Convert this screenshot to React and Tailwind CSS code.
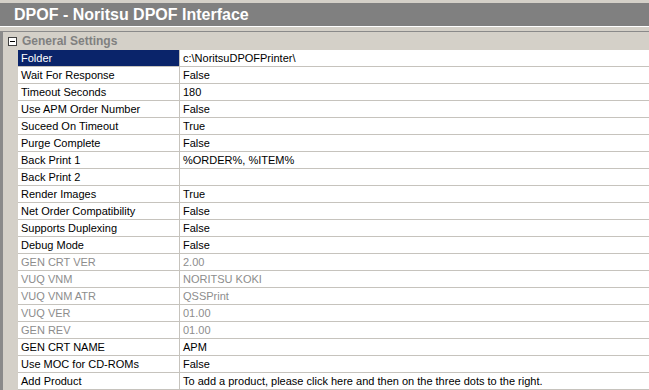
import React from "react";

const rows = [
  ["Folder", "c:\\NoritsuDPOFPrinter\\", "sel"],
  ["Wait For Response", "False"],
  ["Timeout Seconds", "180"],
  ["Use APM Order Number", "False"],
  ["Suceed On Timeout", "True"],
  ["Purge Complete", "False"],
  ["Back Print 1", "%ORDER%, %ITEM%"],
  ["Back Print 2", ""],
  ["Render Images", "True"],
  ["Net Order Compatibility", "False"],
  ["Supports Duplexing", "False"],
  ["Debug Mode", "False"],
  ["GEN CRT VER", "2.00", "off"],
  ["VUQ VNM", "NORITSU KOKI", "off"],
  ["VUQ VNM ATR", "QSSPrint", "off"],
  ["VUQ VER", "01.00", "off"],
  ["GEN REV", "01.00", "off"],
  ["GEN CRT NAME", "APM"],
  ["Use MOC for CD-ROMs", "False"],
  ["Add Product", "To add a product, please click here and then on the three dots to the right."],
];

function Row({ label, value, kind }) {
  const sel = kind === "sel";
  const off = kind === "off";
  return (
    <div className="flex h-[17px] border-b border-[#c6c3bd]">
      <div
        className={
          "w-[162px] shrink-0 pl-[3px] leading-[16px] border-r border-[#c6c3bd] " +
          (sel ? "bg-[#0a246a] text-white" : off ? "bg-white text-[#8d8d8d]" : "bg-white text-black")
        }
      >
        {label}
      </div>
      <div className={"flex-1 pl-[3px] leading-[16px] bg-white whitespace-nowrap " + (off ? "text-[#8d8d8d]" : "text-black")}>
        {value}
      </div>
    </div>
  );
}

export default function App() {
  return (
    <div
      className="w-[649px] h-[390px] overflow-hidden bg-[#d4d0c8] pt-[3px]"
      style={{ fontFamily: "'Liberation Sans', Arial, sans-serif" }}
    >
      <div className="h-[24px] bg-[#808080] border-b border-white flex items-center pl-[14px]">
        <span className="text-white font-bold text-[16px] leading-none">DPOF - Noritsu DPOF Interface</span>
      </div>
      <div className="h-[4px] bg-[#d4d0c8]" />
      <div className="border-l-[3px] border-t border-[#8a8a8a] bg-[#d4d0c8] text-[11px]">
        <div className="flex items-center h-[18px]">
          <div className="ml-[5px] w-[9px] h-[9px] border border-[#404040] bg-white flex items-center justify-center">
            <div className="w-[5px] h-[1px] bg-black" />
          </div>
          <span className="ml-[5px] font-bold text-[12px] text-[#808080]">General Settings</span>
        </div>
        <div className="ml-[15px]">
          {rows.map(([l, v, k]) => (
            <Row key={l} label={l} value={v} kind={k} />
          ))}
        </div>
      </div>
    </div>
  );
}
